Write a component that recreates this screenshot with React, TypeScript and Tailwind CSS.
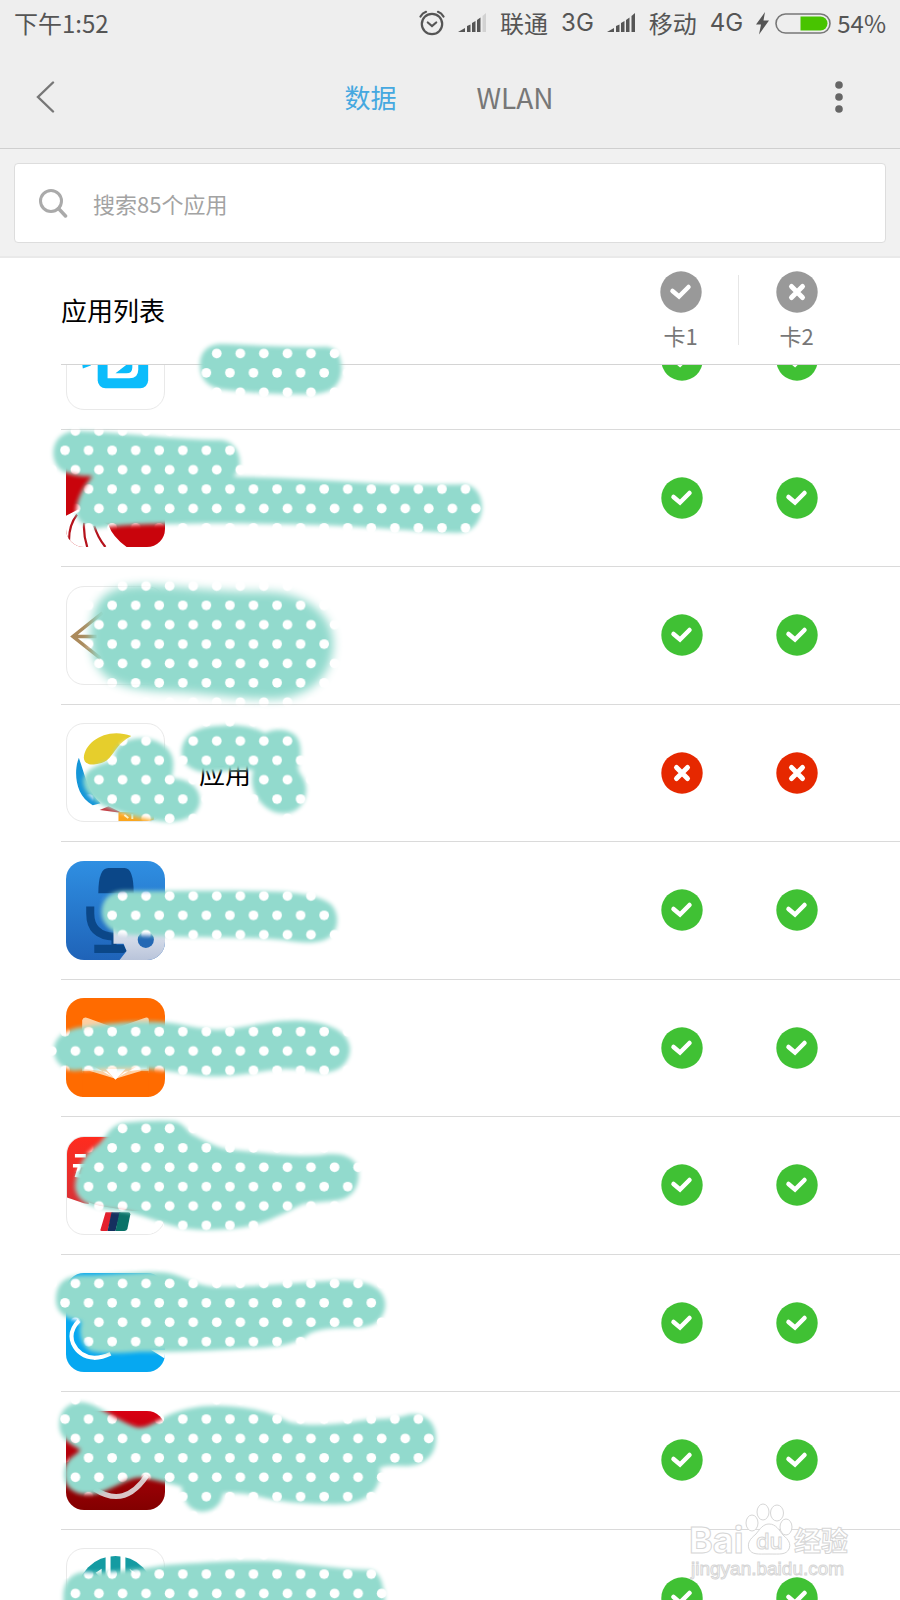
import { useState } from 'react';
import type { ReactNode } from 'react';
import clsx from 'clsx';

type AppRow = {
  id: string;
  name?: string;
  outlined?: boolean;
  sim1: boolean;
  sim2: boolean;
  art: ReactNode;
};

const initialRows: AppRow[] = [
  {
    id: 'docs',
    outlined: true,
    sim1: true,
    sim2: true,
    art: (
      <>
        <rect x="31" y="18" width="51" height="59" rx="8" fill="#0bbcfb" />
        <path d="M41 30H62Q72 30 72 44V58Q72 67 63 67H41Z" fill="#fff" />
        <path d="M49 62L63 51V40H66V56Q66 62 60 62Z" fill="#0bbcfb" />
        <path d="M15 50H26L24 54L16 57Z" fill="#0bbcfb" />
      </>
    ),
  },
  {
    id: 'stripes',
    sim1: true,
    sim2: true,
    art: (
      <>
        <rect width="98" height="98" fill="#c9040c" />
        <path d="M0 67L12 61L42 76Q46 88 60 98H0Z" fill="#fff" />
        <path d="M11 66Q3 76 3 91M18 74Q17 86 21 98M28 77Q31 88 39 98" stroke="#b5121b" strokeWidth="2.2" fill="none" />
      </>
    ),
  },
  {
    id: 'arrow',
    outlined: true,
    sim1: true,
    sim2: true,
    art: <path d="M36 26L6 50L34 72M8 50H30" stroke="#ab8a5c" strokeWidth="3.5" fill="none" />,
  },
  {
    id: 'ball',
    name: '应用',
    outlined: true,
    sim1: false,
    sim2: false,
    art: (
      <>
        <path d="M17 34C18 18 40 3 65 12C52 19 50 26 43 34C38 40 30 41 24 41C19 40 17 37 17 34Z" fill="#e6ce2c" />
        <path d="M12 34C7 46 7 72 26 82L34 80C22 70 18 52 12 34Z" fill="#1596d8" />
        <path d="M33 87L42 83L56 90Z" fill="#c8343c" />
        <path d="M52 89H88V98H52Z" fill="#fba51c" />
        <path d="M58 92L62 95M66 91V96" stroke="#fff3c0" strokeWidth="2" />
      </>
    ),
  },
  {
    id: 'recorder',
    sim1: true,
    sim2: true,
    art: (
      <>
        <rect width="98" height="98" fill="url(#recorderBg)" />
        <path d="M32 32Q32 7 42 7H58Q67 7 67 32Z" fill="#0b4788" />
        <path d="M24 45V52Q24 74 48 75" stroke="#0b4788" strokeWidth="8" fill="none" />
        <path d="M45 74H50V83H57L60 89L57 91H28V83H45Z" fill="#0b4788" />
        <path d="M47 60H98V98H53L60 89L57 82H47Z" fill="url(#recorderCard)" />
        <circle cx="79" cy="78" r="8" fill="#2468b4" />
      </>
    ),
  },
  {
    id: 'mail',
    sim1: true,
    sim2: true,
    art: (
      <>
        <rect width="98" height="98" fill="#ff6b00" />
        <path d="M16 22Q17 18 22 20L49 30L77 20Q82 18 82 22V74L49 80L16 74Z" fill="#ffd0a3" />
        <path d="M18 62L49 80L80 62V70L58 73L49 81L40 73L18 70Z" fill="#fff" />
        <path d="M16 72L23 72L49 80L75 72H82V98H16Z" fill="#ff6b00" />
        <path d="M39 70H59L49 81Z" fill="#fff" />
      </>
    ),
  },
  {
    id: 'bank',
    outlined: true,
    sim1: true,
    sim2: true,
    art: (
      <>
        <path d="M0 0H98V80L17 67L0 61Z" fill="url(#bankBg)" />
        <path d="M22 66Q50 78 98 74V98H22Z" fill="#fff" />
        <path d="M8 19H19M6 29H21M13 29L10 39L18 40" stroke="#fff" strokeWidth="3.5" fill="none" />
        <path d="M39 76H46L41 95H35Q33 95 34 93Z" fill="#e3202d" />
        <path d="M45 76H54L49 95H41Z" fill="#15305f" />
        <path d="M53 76H62Q64 76 64 78L61 93Q60 95 58 95H49Z" fill="#0a7268" />
      </>
    ),
  },
  {
    id: 'cloud',
    sim1: true,
    sim2: true,
    art: (
      <>
        <path d="M0 0H98V98H0Z" fill="#06a8f1" />
        <path d="M84 76H98V85Z" fill="#fff" />
        <path d="M13 47Q2 58 7 70Q13 83 28 84Q36 84 44 80" stroke="#fff" strokeWidth="4" fill="none" />
      </>
    ),
  },
  {
    id: 'news',
    sim1: true,
    sim2: true,
    art: (
      <>
        <rect width="98" height="98" fill="url(#newsBg)" />
        <path d="M28 77Q58 97 80 64" stroke="#d9c5c7" strokeWidth="5" fill="none" />
      </>
    ),
  },
  {
    id: 'rail',
    outlined: true,
    sim1: true,
    sim2: true,
    art: (
      <>
        <circle cx="49" cy="46" r="39" fill="#149ba2" />
        <path d="M41.5 5V60M56.5 5V60" stroke="#fff" strokeWidth="5" />
        <path d="M29 24L35 20V30ZM63 20L69 24V30Z" fill="#fff" />
      </>
    ),
  },
];

// Brush strokes are drawn on a canvas at three times the page scale
const strokes = [
  { y: 250, d: 'M480 345C480 300 510 282 545 282C640 284 740 294 860 290C890 292 905 320 905 355C905 400 880 430 820 432C720 436 600 426 540 418C500 408 480 385 480 345Z' },
  { y: 250, d: 'M40 610C42 565 70 545 110 543C250 548 400 570 545 570C580 574 600 605 600 640C600 655 590 670 580 680C720 682 860 690 1000 700C1100 705 1200 705 1270 703C1310 706 1328 740 1326 776C1322 820 1295 848 1250 848C1130 846 960 826 800 824C640 820 520 818 400 822C300 822 210 828 170 835C135 830 110 815 108 785C110 750 130 708 158 678C120 680 90 672 70 665C50 655 40 630 40 610Z' },
  { y: 560, soft: true, d: 'M165 150C185 95 235 75 330 75C430 80 540 97 680 95C800 98 880 165 880 250C880 330 830 410 700 418C600 418 500 400 400 395C280 392 220 375 185 335C150 300 140 210 165 150Z' },
  { y: 560, d: 'M225 600C215 570 250 535 300 535C360 535 400 570 400 610C400 630 398 645 392 655C440 655 480 680 480 720C480 760 440 785 390 785C340 785 280 770 230 752C180 735 135 710 130 665C130 635 160 615 225 600Z' },
  { y: 560, d: 'M425 570C430 530 460 500 540 497C600 492 640 500 675 520C700 505 740 505 765 525C785 545 785 580 778 610C770 620 775 630 780 640C805 670 805 710 780 740C750 770 700 765 670 735C640 705 630 670 640 630C600 625 520 640 480 635C440 625 422 600 425 570Z' },
  { y: 840, d: 'M185 210C190 175 210 153 260 153C400 153 560 150 720 155C790 160 850 170 875 195C900 225 895 270 870 290C840 312 790 310 730 300C640 290 540 293 420 290C340 287 280 287 240 282C205 270 182 245 185 210Z' },
  { y: 840, d: 'M42 625C45 590 80 563 140 560C220 548 320 540 400 550C460 560 500 573 560 568C640 558 700 540 780 542C860 546 925 570 930 625C930 675 890 700 840 698C790 688 740 682 680 692C620 702 560 712 490 708C420 702 360 685 280 685C200 685 150 690 100 692C60 685 40 660 42 625Z' },
  { y: 1100, d: 'M105 260C108 210 130 170 160 145C200 120 200 80 250 68C310 62 370 60 410 65C440 78 440 95 460 105C500 125 530 145 580 150C680 160 760 170 840 166C880 158 930 160 950 195C965 235 950 280 915 295C880 308 820 305 790 312C740 335 680 370 610 382C540 392 460 392 410 380C350 365 300 340 240 332C190 328 110 320 105 260Z' },
  { y: 1100, d: 'M48 595C50 545 80 522 150 526C230 524 320 512 380 518C430 525 460 555 520 560C650 562 760 548 880 542C960 538 1030 550 1036 610C1036 660 1000 685 940 683C880 683 840 685 810 700C780 725 740 738 680 742C560 750 420 758 300 755C240 760 180 762 150 752C120 735 115 690 125 665C90 660 45 645 48 595Z' },
  { y: 1370, d: 'M58 160C60 115 90 95 130 97C180 105 220 148 290 172C315 175 330 165 360 150C410 118 480 105 550 108C640 112 700 130 745 155C800 170 880 165 960 152C1020 145 1060 150 1110 133C1160 130 1190 160 1188 210C1185 260 1150 290 1090 288C1060 288 1035 285 1018 295C1025 320 1015 350 995 370C960 400 920 405 860 402C780 402 720 395 650 378C620 370 585 368 550 370C545 395 530 425 485 425C440 420 430 385 425 350C390 340 350 330 310 323C270 320 240 345 200 360C150 385 95 375 78 340C65 310 75 270 105 255L122 240C90 222 56 205 58 160Z' },
  { y: 1370, d: 'M70 670C75 620 110 600 160 608C230 605 300 598 380 585C480 578 600 570 700 574C800 582 900 598 990 600C1020 605 1035 640 1035 720L70 720Z' },
];

function Signal({ weak }: { weak?: boolean }) {
  return (
    <svg width="29" height="20" viewBox="0 0 29 20" fill="#555" aria-hidden="true">
      <path d="M0 19L7 15V19Z" />
      <path d="M9 13L12.5 11.5V19H9Z" />
      <path d="M14 10L17.5 8V19H14Z" />
      <path d="M19 7L22.5 4.5V19H19Z" />
      <path d="M24.5 3L28 0V19H24.5Z" fill={weak ? '#d2d2d2' : '#555'} />
    </svg>
  );
}

function StatusBar() {
  return (
    <div className="flex h-12 items-center justify-between px-3.5 pb-0.5 text-2xl leading-8 text-[#555]">
      <span>下午1:52</span>
      <div className="flex items-center gap-[13px]">
        <svg width="26" height="26" viewBox="0 0 26 26" fill="none" stroke="#555" strokeWidth="2.2" strokeLinecap="round" aria-hidden="true">
          <circle cx="13" cy="14" r="10.2" />
          <path d="M8.8 12.5L13 16L17.2 12.5" />
          <path d="M1.5 6.5Q3.5 3 7 1.8M24.5 6.5Q22.5 3 19 1.8" />
        </svg>
        <Signal weak />
        <span>联通</span>
        <span className="font-[Inter,sans-serif]">3G</span>
        <Signal />
        <span>移动</span>
        <span className="font-[Inter,sans-serif]">4G</span>
        <div className="flex items-center gap-1.5">
          <svg width="13" height="24" viewBox="0 0 13 24" fill="#555" aria-hidden="true">
            <path d="M9 1L0 13.5H5L3 23.5L13 9.5H7.5Z" />
          </svg>
          <svg width="56" height="21" viewBox="0 0 56 21" aria-hidden="true">
            <rect x="1" y="1" width="54" height="19" rx="9.5" fill="none" stroke="#777" strokeWidth="1.6" />
            <path d="M25.5 3.5H45.5A7 7 0 0 1 45.5 17.5H25.5Z" fill="#48c400" />
          </svg>
          <span>54%</span>
        </div>
      </div>
    </div>
  );
}

function StateIcon({ on, className }: { on: boolean; className: string }) {
  return (
    <svg viewBox="0 0 42 42" className={clsx('size-[42px]', className)} aria-hidden="true">
      <circle cx="21" cy="21" r="20.7" fill="currentColor" />
      <path
        d={on ? 'M12.5 20L19 25.5L28.5 16' : 'M15.5 15.5L26.5 26.5M26.5 15.5L15.5 26.5'}
        fill="none"
        stroke="#fff"
        strokeWidth={on ? 4.5 : 5}
        strokeLinecap="round"
      />
    </svg>
  );
}

function Redactions() {
  return (
    <svg className="pointer-events-none absolute left-0 top-0 h-full w-full" aria-hidden="true">
      <defs>
        <pattern id="dots" x="59" y="440.6" width="23.56" height="38.75" patternUnits="userSpaceOnUse">
          <rect width="24" height="39" fill="#92dacd" />
          <circle cx="6" cy="9.7" r="4.85" fill="#fff" />
          <circle cx="16.4" cy="29.1" r="4.85" fill="#fff" />
        </pattern>
        <filter id="edge" x="-10%" y="-20%" width="120%" height="140%">
          <feGaussianBlur stdDeviation="7" />
        </filter>
        <filter id="softEdge" x="-10%" y="-20%" width="120%" height="140%">
          <feGaussianBlur stdDeviation="15" />
        </filter>
        <mask id="brush" maskUnits="userSpaceOnUse" x="0" y="0" width="900" height="1700">
          {strokes.map((stroke) => (
            <path
              key={stroke.d}
              d={stroke.d}
              transform={`translate(40 ${stroke.y}) scale(0.3333)`}
              fill="#fff"
              filter={stroke.soft ? 'url(#softEdge)' : 'url(#edge)'}
            />
          ))}
        </mask>
        <linearGradient id="recorderBg" x2="0" y2="1">
          <stop stopColor="#2f8fe2" />
          <stop offset="1" stopColor="#1f63b8" />
        </linearGradient>
        <linearGradient id="recorderCard" x2="0" y2="1">
          <stop stopColor="#e9edf5" />
          <stop offset="1" stopColor="#b9c4da" />
        </linearGradient>
        <linearGradient id="bankBg" x2="0" y2="1">
          <stop stopColor="#ff2b1e" />
          <stop offset="1" stopColor="#d2313a" />
        </linearGradient>
        <linearGradient id="newsBg" x2="0" y2="1">
          <stop stopColor="#d80012" />
          <stop offset="1" stopColor="#820000" />
        </linearGradient>
      </defs>
      <rect width="900" height="1700" fill="url(#dots)" mask="url(#brush)" />
    </svg>
  );
}

function Watermark() {
  return (
    <svg className="pointer-events-none absolute bottom-5 right-10 h-20 w-[172px]" viewBox="0 0 172 80" fill="#fff" stroke="#d6d6d6" strokeWidth="1" aria-hidden="true">
      <text x="1" y="53" fontSize="36" fontWeight="700" fontFamily="Inter, sans-serif">Bai</text>
      <ellipse cx="64" cy="23" rx="6" ry="8" />
      <ellipse cx="75" cy="12" rx="6" ry="8" />
      <ellipse cx="89" cy="13" rx="6.5" ry="8" />
      <ellipse cx="98" cy="27" rx="6" ry="8" />
      <path d="M81 24C88 24 91 30 95 35C101 40 103 44 101 49C98 55 92 54 81 54C70 54 64 55 61 49C59 43 62 39 68 34C72 29 75 24 81 24Z" />
      <text x="68" y="49" fontSize="22" fontWeight="500" fontFamily="Inter, sans-serif">du</text>
      <text x="106" y="51" fontSize="27" fontWeight="700" fontFamily="'Noto Sans CJK SC', sans-serif">经验</text>
      <text x="3" y="75" fontSize="19" fontFamily="'Liberation Sans', sans-serif">jingyan.baidu.com</text>
    </svg>
  );
}

export default function App() {
  const [rows, setRows] = useState(initialRows);
  const [tab, setTab] = useState('数据');

  const toggle = (id: string, sim: 'sim1' | 'sim2') => {
    setRows(rows.map((row) => (row.id === id ? { ...row, [sim]: !row[sim] } : row)));
  };

  return (
    <div className="relative flex h-screen flex-col overflow-hidden bg-white font-['Noto_Sans_CJK_SC',sans-serif]">
      <header className="border-b border-[#cfcfcf] bg-[#eee]">
        <StatusBar />
        <div className="flex h-[100px] items-center justify-between px-8 pb-0.5">
          <button type="button" aria-label="返回" className="flex h-8 w-14 items-center pl-1">
            <svg width="20" height="32" viewBox="0 0 20 32" fill="none" stroke="#777" strokeWidth="2.4" strokeLinecap="round" aria-hidden="true">
              <path d="M17 1.5L2 16L17 30.5" />
            </svg>
          </button>
          <nav className="flex items-center gap-20">
            {['数据', 'WLAN'].map((name) => (
              <button
                key={name}
                type="button"
                onClick={() => setTab(name)}
                className={clsx(
                  'leading-10',
                  name === 'WLAN' ? 'text-[28px]' : 'text-[26px]',
                  name === tab ? 'text-[#45a8e0]' : 'text-[#777]'
                )}
              >
                {name}
              </button>
            ))}
          </nav>
          <button type="button" aria-label="更多" className="flex h-8 w-[58px] items-center justify-center">
            <svg width="8" height="32" viewBox="0 0 8 32" fill="#666" aria-hidden="true">
              <circle cx="4" cy="4" r="3.8" />
              <circle cx="4" cy="16" r="3.8" />
              <circle cx="4" cy="28" r="3.8" />
            </svg>
          </button>
        </div>
      </header>

      <div className="border-b-2 border-[#e9e9e9] bg-[#f1f1f1] px-3.5 pb-[13px] pt-3.5">
        <label className="flex h-20 items-center gap-6 rounded-sm border border-[#ddd] bg-white px-6">
          <svg width="30" height="30" viewBox="0 0 30 30" fill="none" stroke="#aaa" strokeWidth="3" strokeLinecap="round" aria-hidden="true">
            <circle cx="12" cy="13" r="10.5" />
            <path d="M19.5 20.5L26.5 28" strokeWidth="3.5" />
          </svg>
          <input
            type="search"
            aria-label="搜索应用"
            placeholder="搜索85个应用"
            className="min-w-0 flex-1 bg-transparent text-[22px] leading-8 outline-none placeholder:text-[#a3a3a3]"
          />
        </label>
      </div>

      <div className="flex h-[106px] items-center bg-white pb-0.5 pl-[61px] pr-[46px]">
        <h1 className="flex-1 text-[26px] leading-10 text-black">应用列表</h1>
        <div className="flex w-[115px] flex-col items-center gap-2">
          <StateIcon on className="text-[#999]" />
          <span className="text-[22px] leading-7 text-[#777]">卡1</span>
        </div>
        <div className="h-[70px] w-px bg-[#e6e6e6]" />
        <div className="flex w-[115px] flex-col items-center gap-2">
          <StateIcon on={false} className="text-[#999]" />
          <span className="text-[22px] leading-7 text-[#777]">卡2</span>
        </div>
      </div>

      <main className="ml-[61px] min-h-0 flex-1 overflow-hidden border-t border-[#d4d4d4]">
        {/* The list rests scrolled part of the way into its first row */}
        <ul className="-mt-[73px]">
          {rows.map((row) => (
            <li key={row.id} className="flex items-center border-b border-[#dadada] pb-px pl-[5px] pr-[46px] odd:h-[138px] even:h-[137px]">
              <div className={clsx('size-[99px] overflow-hidden rounded-[18px]', row.outlined && 'border border-[#e9e9e9]')}>
                <svg viewBox="0 0 98 98" className="size-full" aria-hidden="true">
                  {row.art}
                </svg>
              </div>
              <span className="flex-1 pl-[34px] text-[26px] leading-10 text-black">{row.name}</span>
              <div className="flex w-[115px] justify-center">
                <button type="button" aria-label="卡1" aria-pressed={row.sim1} onClick={() => toggle(row.id, 'sim1')}>
                  <StateIcon on={row.sim1} className={row.sim1 ? 'text-[#40c134]' : 'text-[#e62800]'} />
                </button>
              </div>
              <div className="flex w-[115px] justify-center">
                <button type="button" aria-label="卡2" aria-pressed={row.sim2} onClick={() => toggle(row.id, 'sim2')}>
                  <StateIcon on={row.sim2} className={row.sim2 ? 'text-[#40c134]' : 'text-[#e62800]'} />
                </button>
              </div>
            </li>
          ))}
        </ul>
      </main>

      <Redactions />
      <Watermark />
    </div>
  );
}
